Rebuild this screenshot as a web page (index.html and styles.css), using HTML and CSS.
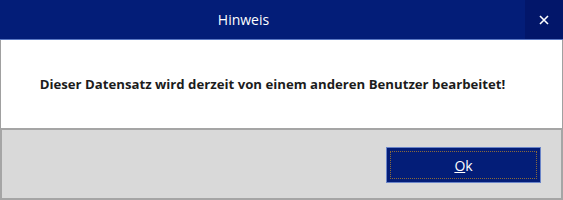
FILE: index.html
```html
<!DOCTYPE html>
<html>
<head>
	<title>Hinweis</title>
	<link rel="stylesheet" href="styles.css">
</head>
<body>

	<div id="boxDialog">

		<div id="boxTitle">
			<span id="lblTitle">Hinweis</span>
			<button id="btnClose">
				<svg width="10" height="10" viewBox="0 0 10 10">
					<path d="M1 1 L9 9 M9 1 L1 9" stroke="#ffffff" stroke-width="1.6"/>
				</svg>
			</button>
		</div>

		<div id="boxMessage">
			<span class="lblMessage">Dieser Datensatz wird derzeit von einem anderen Benutzer bearbeitet!</span>
		</div>

		<div id="boxButtons">
			<button id="btnOk"><span class="focusRing"><u>O</u>k</span></button>
		</div>

	</div>

</body>
</html>
```

FILE: styles.css
```css
*{
	margin: 0px;
	padding: 0px;
	box-sizing: border-box;
}

body{
	width: 563px;
	height: 200px;
	overflow: hidden;
	font-family: "Open Sans", "Noto Sans", sans-serif;
}

#boxDialog{
	display: flex;
	flex-direction: column;
	width: 563px;
	height: 200px;
}

#boxTitle{
	position: relative;
	display: flex;
	align-items: center;
	justify-content: center;
	height: 40px;
	padding-right: 76px;
	background-color: #031d78;
	border-bottom: 1px solid #5b78c4;
	color: #ffffff;
}

#lblTitle{
	font-size: 14px;
	margin-top: -1px;
}

#btnClose{
	position: absolute;
	top: 0px;
	right: 0px;
	width: 38px;
	height: 39px;
	display: flex;
	align-items: center;
	justify-content: center;
	background-color: #02166a;
	border: none;
}

#boxMessage{
	display: flex;
	align-items: center;
	justify-content: center;
	height: 90px;
	padding-right: 18px;
	background-color: #ffffff;
	border-left: 1px solid #a0a0a0;
	border-right: 1px solid #a0a0a0;
	border-bottom: 2px solid #a5a5a5;
}

.lblMessage{
	font-size: 13.2px;
	font-weight: bold;
	color: #1c1c1c;
}

#boxButtons{
	flex: 1;
	display: flex;
	justify-content: flex-end;
	padding: 17px 20px 0px 0px;
	background-color: #d9d9d9;
	border-left: 2px solid #a5a5a5;
	border-right: 2px solid #a5a5a5;
	border-bottom: 2px solid #a5a5a5;
}

#btnOk{
	width: 155px;
	height: 36px;
	padding: 3px;
	background-color: #031d78;
	border: 1px solid #6a84c8;
	color: #ffffff;
	font-family: "Open Sans", "Noto Sans", sans-serif;
	font-size: 14px;
}

.focusRing{
	display: flex;
	align-items: center;
	justify-content: center;
	width: 100%;
	height: 100%;
	border: 1px dotted #8a6a3a;
}
```
